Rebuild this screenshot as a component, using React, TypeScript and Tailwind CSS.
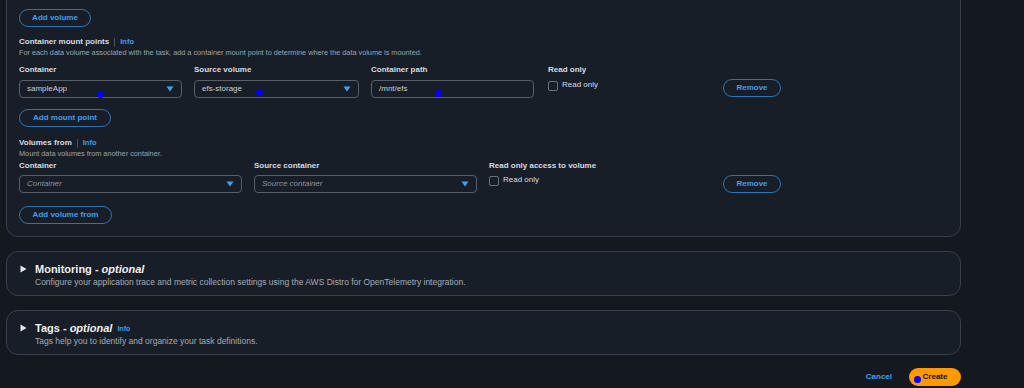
import React from "react";

const font = { fontFamily: '"Liberation Sans", Arial, sans-serif' };

const Caret = () => (
  <svg width="8" height="6" viewBox="0 0 8 6" className="shrink-0">
    <path d="M0.5 0.5 L7.5 0.5 L4 5.5 Z" fill="#3f9ff0" />
  </svg>
);

const OutlineButton = ({ label, w }: { label: string; w: string }) => (
  <button
    className={`${w} h-[18px] rounded-full border-[1.5px] border-[#2b75b3] text-[8px] font-bold text-[#409fee] flex items-center justify-center leading-none`}
  >
    {label}
  </button>
);

const FieldLabel = ({ children }: { children: React.ReactNode }) => (
  <div className="h-[12px] leading-[12px] text-[8px] font-bold text-[#d6dbe2]">{children}</div>
);

const Select = ({
  value,
  placeholder,
  w,
  caret = true,
}: {
  value?: string;
  placeholder?: string;
  w: string;
  caret?: boolean;
}) => (
  <div
    className={`${w} h-[18px] rounded-[4px] border border-[#585f69] flex items-center justify-between pl-[7px] pr-[7px]`}
  >
    {value ? (
      <span className="text-[8px] text-[#c9ced5]">{value}</span>
    ) : (
      <span className="text-[8px] italic text-[#8c949e]">{placeholder}</span>
    )}
    {caret && <Caret />}
  </div>
);

const Checkbox = () => (
  <div className="w-[10px] h-[10px] rounded-[2px] border border-[#6a717b] shrink-0" />
);

const SectionHeader = ({ title, desc }: { title: string; desc: string }) => (
  <>
    <div className="flex items-center h-[12px] leading-[12px]">
      <span className="text-[8px] font-bold text-[#d6dbe2]">{title}</span>
      <span className="mx-[5px] w-px h-[9px] bg-[#4a5059]" />
      <span className="text-[7.5px] font-bold text-[#409fee]">Info</span>
    </div>
    <div className="h-[10px] leading-[10px] text-[7.3px] text-[#9ba3ad]">{desc}</div>
  </>
);

const Collapsed = ({ title, desc, info }: { title: string; desc: string; info?: boolean }) => (
  <div className="rounded-[12px] border border-[#3a4049] bg-[#181e28] pt-[10px] pb-[8px] pl-[13px]">
    <div className="flex items-center h-[14px]">
      <svg width="7" height="8" viewBox="0 0 7 8" className="mr-[8px]">
        <path d="M0.5 0.5 L6.5 4 L0.5 7.5 Z" fill="#e4e7eb" />
      </svg>
      <span className="text-[11px] font-bold text-[#eef0f3] leading-[14px]">
        {title} - <i>optional</i>
      </span>
      {info && <span className="ml-[5px] text-[7px] font-bold text-[#409fee] mt-[2px]">Info</span>}
    </div>
    <div className="mt-px h-[10px] leading-[10px] text-[8.5px] text-[#a3abb5] pl-[15px]">{desc}</div>
  </div>
);

const Dot = ({ x, y }: { x: string; y: string }) => (
  <div className={`absolute ${x} ${y} w-[7px] h-[7px] rounded-full bg-[#0000ff]`} />
);

export default function App() {
  return (
    <div className="relative w-[1024px] h-[388px] overflow-hidden bg-[#141920]" style={font}>
      <div className="ml-[6px] w-[955px]">
        {/* storage card (top cut off) */}
        <div className="-mt-[20px] rounded-b-[12px] border border-[#3a4049] bg-[#181e28] pt-[28px] pb-[12px] pl-[12px]">
          <OutlineButton label="Add volume" w="w-[72px]" />

          <div className="mt-[9px]">
            <SectionHeader
              title="Container mount points"
              desc="For each data volume associated with the task, add a container mount point to determine where the data volume is mounted."
            />
          </div>

          <div className="mt-[6px] flex">
            <div className="w-[163px]">
              <FieldLabel>Container</FieldLabel>
              <div className="mt-[4px]">
                <Select value="sampleApp" w="w-[163px]" />
              </div>
            </div>
            <div className="ml-[12px] w-[165px]">
              <FieldLabel>Source volume</FieldLabel>
              <div className="mt-[4px]">
                <Select value="efs-storage" w="w-[165px]" />
              </div>
            </div>
            <div className="ml-[12px] w-[163px]">
              <FieldLabel>Container path</FieldLabel>
              <div className="mt-[4px]">
                <Select value="/mnt/efs" w="w-[163px]" caret={false} />
              </div>
            </div>
            <div className="ml-[14px] w-[175px]">
              <FieldLabel>Read only</FieldLabel>
              <div className="mt-[4px] flex items-center gap-[4px]">
                <Checkbox />
                <span className="text-[8px] text-[#d6dbe2] -mt-[1px]">Read only</span>
              </div>
            </div>
            <div className="pt-[15px]">
              <OutlineButton label="Remove" w="w-[58px]" />
            </div>
          </div>

          <div className="mt-[11px]">
            <OutlineButton label="Add mount point" w="w-[92px]" />
          </div>

          <div className="mt-[10px]">
            <SectionHeader title="Volumes from" desc="Mount data volumes from another container." />
          </div>

          <div className="mt-px flex">
            <div className="w-[223px]">
              <FieldLabel>Container</FieldLabel>
              <div className="mt-[3px]">
                <Select placeholder="Container" w="w-[223px]" />
              </div>
            </div>
            <div className="ml-[12px] w-[223px]">
              <FieldLabel>Source container</FieldLabel>
              <div className="mt-[3px]">
                <Select placeholder="Source container" w="w-[223px]" />
              </div>
            </div>
            <div className="ml-[12px] w-[234px]">
              <FieldLabel>Read only access to volume</FieldLabel>
              <div className="mt-[3px] flex items-center gap-[4px]">
                <Checkbox />
                <span className="text-[8px] text-[#d6dbe2] -mt-[1px]">Read only</span>
              </div>
            </div>
            <div className="pt-[15px]">
              <OutlineButton label="Remove" w="w-[58px]" />
            </div>
          </div>

          <div className="mt-[13px]">
            <OutlineButton label="Add volume from" w="w-[93px]" />
          </div>
        </div>

        <div className="mt-[14px]">
          <Collapsed
            title="Monitoring"
            desc="Configure your application trace and metric collection settings using the AWS Distro for OpenTelemetry integration."
          />
        </div>
        <div className="mt-[14px]">
          <Collapsed title="Tags" info desc="Tags help you to identify and organize your task definitions." />
        </div>

        <div className="mt-[13px] flex items-center justify-end">
          <span className="text-[8px] font-bold text-[#409fee]">Cancel</span>
          <button className="ml-[17px] w-[52px] h-[18px] rounded-full bg-[#ff9900] text-[8px] font-bold text-[#0f141a] flex items-center justify-center">
            Create
          </button>
        </div>
      </div>

      <Dot x="left-[97px]" y="top-[91px]" />
      <Dot x="left-[256px]" y="top-[89px]" />
      <Dot x="left-[435px]" y="top-[90px]" />
      <Dot x="left-[914px]" y="top-[376px]" />
    </div>
  );
}
